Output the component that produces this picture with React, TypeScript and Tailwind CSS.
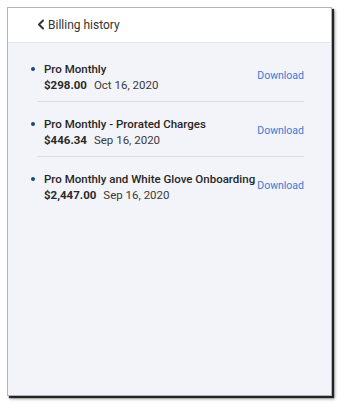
const rows = [
  { title: 'Pro Monthly', amount: '$298.00', date: 'Oct 16, 2020' },
  { title: 'Pro Monthly - Prorated Charges', amount: '$446.34', date: 'Sep 16, 2020' },
  { title: 'Pro Monthly and White Glove Onboarding', amount: '$2,447.00', date: 'Sep 16, 2020' },
];

function ChevronLeft() {
  return (
    <svg width="8" height="11" viewBox="0 0 8 11" fill="none" stroke="currentColor" strokeWidth="2" strokeLinecap="round" strokeLinejoin="round">
      <path d="M6 1.5L2 5.5l4 4" />
    </svg>
  );
}

export default function App() {
  return (
    <div className="w-[346px] h-[410px] bg-white pt-[7px] pl-[7px] font-['Roboto',sans-serif]">
      <div className="w-[325px] h-[389px] flex flex-col bg-[#f3f4f9] border border-[#b4b4b4] shadow-[2px_2px_1px_rgba(0,0,0,0.8),3px_3px_3px_rgba(0,0,0,0.35)]">
        <div className="h-[35px] shrink-0 bg-white border-b border-[#e4e5ea] flex items-center pl-[29px] pb-[1px] gap-[3px] text-[#333]">
          <ChevronLeft />
          <span className="text-[12px] leading-none">Billing history</span>
        </div>
        <div className="pt-[4px] pl-[29px] pr-[27px]">
          {rows.map((r, i) => (
            <div
              key={i}
              className={
                'flex items-center pt-[14px] pb-[8px] ' +
                (i < rows.length - 1 ? 'border-b border-[#dcdde2]' : '')
              }
            >
              <span className="self-start mt-[6px] -ml-[6px] mr-[9px] w-[4px] h-[4px] rounded-full bg-[#1d4a73] shrink-0" />
              <div className="flex-1 min-w-0 text-[11.5px] leading-[16px] whitespace-nowrap">
                <div className="font-medium text-[#262626]">{r.title}</div>
                <div className="text-[#3a3a3a]">
                  <span className="font-bold text-[#2a2a2a]">{r.amount}</span>
                  <span className="ml-[7px]">{r.date}</span>
                </div>
              </div>
              <a className="shrink-0 text-[10.5px] text-[#3b7bd4] mt-[-2px]">Download</a>
            </div>
          ))}
        </div>
      </div>
    </div>
  );
}
